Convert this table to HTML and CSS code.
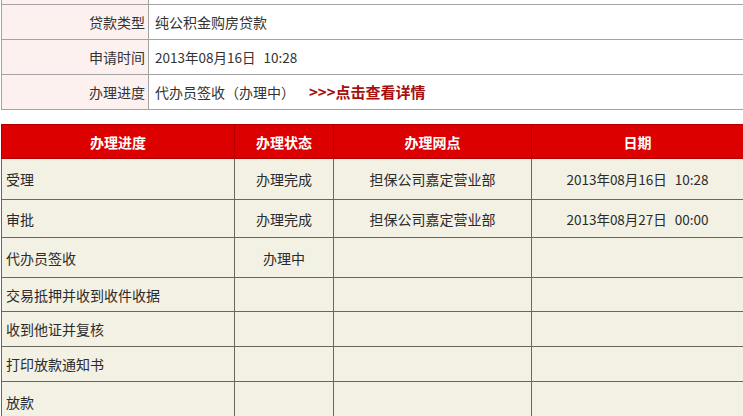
FILE: index.html
```html
<!DOCTYPE html>
<html lang="zh-CN">
<head>
<meta charset="utf-8">
<title>贷款进度</title>
<link rel="stylesheet" href="styles.css">
</head>
<body>
<div class="page">
  <div class="info">
    <div class="lbl top"></div><div class="val top"></div>
    <div class="lbl">贷款类型</div><div class="val">纯公积金购房贷款</div>
    <div class="lbl">申请时间</div><div class="val"><span class="num">2013年08月16日<span class="time">10:28</span></span></div>
    <div class="lbl">办理进度</div><div class="val">代办员签收（办理中）<a class="more" href="#">&gt;&gt;&gt;点击查看详情</a></div>
  </div>

  <div class="head">
    <div>办理进度</div><div>办理状态</div><div>办理网点</div><div>日期</div>
  </div>
  <div class="grid">
    <div class="first">受理</div><div class="c">办理完成</div><div class="c">担保公司嘉定营业部</div><div class="c"><span class="num">2013年08月16日<span class="time">10:28</span></span></div>
    <div class="first">审批</div><div class="c">办理完成</div><div class="c">担保公司嘉定营业部</div><div class="c"><span class="num">2013年08月27日<span class="time">00:00</span></span></div>
    <div class="first">代办员签收</div><div class="c">办理中</div><div class="c"></div><div class="c"></div>
    <div class="first">交易抵押并收到收件收据</div><div class="c"></div><div class="c"></div><div class="c"></div>
    <div class="first">收到他证并复核</div><div class="c"></div><div class="c"></div><div class="c"></div>
    <div class="first">打印放款通知书</div><div class="c"></div><div class="c"></div><div class="c"></div>
    <div class="first">放款</div><div class="c"></div><div class="c"></div><div class="c"></div>
  </div>
</div>
</body>
</html>
```
FILE: styles.css
```css
html, body {
  margin: 0;
  padding: 0;
  background: #ffffff;
  overflow: hidden;
}
body {
  width: 743px;
  height: 416px;
  font-family: "Noto Sans CJK SC", "Noto Sans", sans-serif;
  font-size: 14px;
  color: #2b2b2b;
}
.page {
  width: 742px;
  padding-left: 1px;
}
.info {
  display: grid;
  grid-template-columns: 146px 1fr;
  grid-template-rows: 4px 34px 34px 34px;
  gap: 1px;
  background: #a3a3a3;
  padding: 0 0 1px 1px;
}
.info > div {
  display: flex;
  align-items: center;
  line-height: 16px;
}
.lbl {
  background: #fdf1f0;
  justify-content: flex-end;
  padding-right: 3px;
  color: #333;
}
.val {
  background: #ffffff;
  padding-left: 6px;
  color: #333;
}
.top.lbl, .top.val { padding: 0; }
.num { font-size: 13.5px; letter-spacing: 0; }
.time { margin-left: 8px; }
.more {
  margin-left: 14px;
  color: #a5100f;
  font-weight: bold;
  font-size: 15px;
  text-decoration: none;
}
.head {
  margin-top: 14px;
  display: grid;
  grid-template-columns: 232px 98px 197px 1fr;
  grid-template-rows: 33px;
  gap: 1px;
  background: #b20000;
  padding: 1px 0 1px 1px;
}
.head > div {
  background: #dc0000;
  color: #ffffff;
  font-weight: bold;
  display: flex;
  align-items: center;
  justify-content: center;
  line-height: 16px;
}
.grid {
  display: grid;
  grid-template-columns: 232px 98px 197px 1fr;
  grid-template-rows: 40px 37px 39px 33px 34px 34px 40px;
  gap: 1px;
  background: #6b675d;
  padding: 0 0 0 1px;
}
.grid > div {
  background: #f3f0e4;
  display: flex;
  align-items: center;
  line-height: 16px;
  color: #2b2b2b;
}
.grid .first { padding-left: 4px; }
.grid .c { justify-content: center; }
```
